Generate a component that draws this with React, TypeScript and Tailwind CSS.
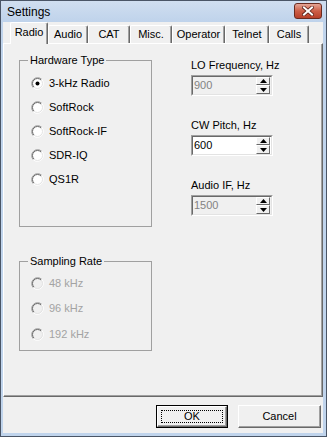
import React from 'react'

const tabs = [
    { label: 'Radio', w: 'w-[38px]' },
    { label: 'Audio', w: 'w-[40px]' },
    { label: 'CAT', w: 'w-[42px]' },
    { label: 'Misc.', w: 'w-[42px]' },
    { label: 'Operator', w: 'w-[53px]' },
    { label: 'Telnet', w: 'w-[44px]' },
    { label: 'Calls', w: 'w-[40px]' },
]

// classic sunken radio button
function Radio({ checked, disabled }: { checked?: boolean; disabled?: boolean }) {
    return (
        <svg width="13" height="13" viewBox="0 0 13 13" className="shrink-0">
            <circle cx="6.5" cy="6.5" r="5.5" fill={disabled ? '#f0f0f0' : '#ffffff'} />
            <path d="M2.26 10.74 A6 6 0 0 1 10.74 2.26" fill="none" stroke="#a0a0a0" strokeWidth="1" />
            <path d="M10.74 2.26 A6 6 0 0 1 2.26 10.74" fill="none" stroke="#ffffff" strokeWidth="1" />
            <path d="M2.96 10.04 A5 5 0 0 1 10.04 2.96" fill="none" stroke="#696969" strokeWidth="1" />
            <path d="M10.04 2.96 A5 5 0 0 1 2.96 10.04" fill="none" stroke="#e3e3e3" strokeWidth="1" />
            {checked && <circle cx="6.5" cy="6.5" r="2" fill="#000" />}
        </svg>
    )
}

function RadioRow({ label, checked, disabled, h }: { label: string; checked?: boolean; disabled?: boolean; h: string }) {
    return (
        <div className={`flex items-center gap-[5px] ${h}`}>
            <Radio checked={checked} disabled={disabled} />
            <span className={disabled ? 'text-[#a3a3a3]' : 'text-black'}>{label}</span>
        </div>
    )
}

function SpinEdit({ value, disabled }: { value: string; disabled?: boolean }) {
    return (
        <div className="w-[82px] h-[21px] border border-t-[#a0a0a0] border-l-[#a0a0a0] border-r-white border-b-white">
            <div className={`h-full flex border border-t-[#696969] border-l-[#696969] border-r-[#e3e3e3] border-b-[#e3e3e3] ${disabled ? 'bg-[#f0f0f0]' : 'bg-white'}`}>
                <span className={`flex-1 pl-[1px] leading-[17px] ${disabled ? 'text-[#838383]' : 'text-black'}`}>{value}</span>
                <div className="w-[14px] flex flex-col mr-[1px]">
                    <div className="h-[8px] flex items-center justify-center bg-[#f0f0f0] border border-white border-r-[#696969] border-b-[#696969]">
                        <svg width="7" height="4" viewBox="0 0 7 4"><polygon points="3.5,0 7,4 0,4" fill="#000" /></svg>
                    </div>
                    <div className="h-[9px] flex items-center justify-center bg-[#f0f0f0] border border-white border-r-[#696969] border-b-[#696969]">
                        <svg width="7" height="4" viewBox="0 0 7 4"><polygon points="0,0 7,0 3.5,4" fill="#000" /></svg>
                    </div>
                </div>
            </div>
        </div>
    )
}

function Field({ label, value, disabled, className }: { label: string; value: string; disabled?: boolean; className?: string }) {
    return (
        <div className={className}>
            <div className="h-[13px] leading-[13px]">{label}</div>
            <div className="mt-[3px]">
                <SpinEdit value={value} disabled={disabled} />
            </div>
        </div>
    )
}

export default function App() {
    return (
        <div className="w-[327px] h-[437px] flex flex-col bg-[#c0d4ec] border border-[#4a5566] font-['Liberation_Sans',Arial,sans-serif] text-[11px] text-black">
            {/* title bar */}
            <div className="h-[21px] flex items-start justify-between pl-[6px] pr-[4px] bg-gradient-to-b from-[#d0def0] to-[#bfd3eb]">
                <span className="text-[12px] leading-[21px] pt-[1px]">Settings</span>
                <div className="mt-[2px] w-[28px] h-[16px] rounded-[3px] border border-[#6a2b20] bg-gradient-to-b from-[#e4a596] via-[#cc5e47] to-[#b7402a] flex items-center justify-center">
                    <svg width="12" height="10" viewBox="0 0 12 10">
                        <path d="M2 1.5 L10 8.5 M10 1.5 L2 8.5" stroke="#5a2018" strokeWidth="3.6" strokeLinecap="square" />
                        <path d="M2 1.5 L10 8.5 M10 1.5 L2 8.5" stroke="#ffffff" strokeWidth="2" strokeLinecap="square" />
                    </svg>
                </div>
            </div>

            {/* client area */}
            <div className="flex-1 flex flex-col ml-[2px] mr-[3px] mb-[3px] bg-[#f0f0f0]">
                <div className="h-[21px] flex items-end pl-[7px]">
                    {tabs.map((t, i) => (
                        <div
                            key={t.label}
                            className={`${t.w} flex items-center justify-center border-l border-t border-white border-r border-r-[#696969] shadow-[inset_-1px_0_0_#a0a0a0] rounded-t-[2px] ${i === 0 ? 'h-[22px] -mb-[1px] relative z-10 bg-[#f0f0f0] pb-[2px]' : 'h-[18px]'}`}
                        >
                            {t.label}
                        </div>
                    ))}
                </div>

                <div className="h-[354px] flex border border-white border-r-[#696969] border-b-[#696969] shadow-[inset_-1px_-1px_0_#a0a0a0] pl-[15px] pt-[10px]">
                    <div className="w-[133px] flex flex-col">
                        <fieldset className="h-[173px] border border-[#a0a0a0] pl-[11px]">
                            <legend className="-ml-[3px] px-[2px] leading-[13px]">Hardware Type</legend>
                            <div className="pt-[4px]">
                                <RadioRow label="3-kHz Radio" checked h="h-[24px]" />
                                <RadioRow label="SoftRock" h="h-[24px]" />
                                <RadioRow label="SoftRock-IF" h="h-[24px]" />
                                <RadioRow label="SDR-IQ" h="h-[24px]" />
                                <RadioRow label="QS1R" h="h-[24px]" />
                            </div>
                        </fieldset>
                        <fieldset className="mt-[28px] h-[96px] border border-[#a0a0a0] pl-[11px]">
                            <legend className="-ml-[3px] px-[2px] leading-[13px]">Sampling Rate</legend>
                            <div className="pt-[2px]">
                                <RadioRow label="48 kHz" disabled h="h-[26px]" />
                                <RadioRow label="96 kHz" disabled h="h-[25px]" />
                                <RadioRow label="192 kHz" disabled h="h-[26px]" />
                            </div>
                        </fieldset>
                    </div>
                    <div className="ml-[39px] mt-[5px] flex flex-col">
                        <Field label="LO Frequency, Hz" value="900" disabled />
                        <Field label="CW Pitch, Hz" value="600" className="mt-[23px]" />
                        <Field label="Audio IF, Hz" value="1500" disabled className="mt-[23px]" />
                    </div>
                </div>

                <div className="flex justify-end gap-[10px] pt-[8px] pr-[2px]">
                    <div className="w-[72px] h-[23px] border border-black">
                        <div className="h-full p-[3px] border border-white border-r-[#696969] border-b-[#696969] shadow-[inset_-1px_-1px_0_#a0a0a0]">
                            <div className="h-full flex items-center justify-center border border-dotted border-black">OK</div>
                        </div>
                    </div>
                    <div className="w-[83px] h-[23px] flex items-center justify-center border border-white border-r-[#696969] border-b-[#696969] shadow-[inset_-1px_-1px_0_#a0a0a0]">
                        Cancel
                    </div>
                </div>
            </div>
        </div>
    )
}
